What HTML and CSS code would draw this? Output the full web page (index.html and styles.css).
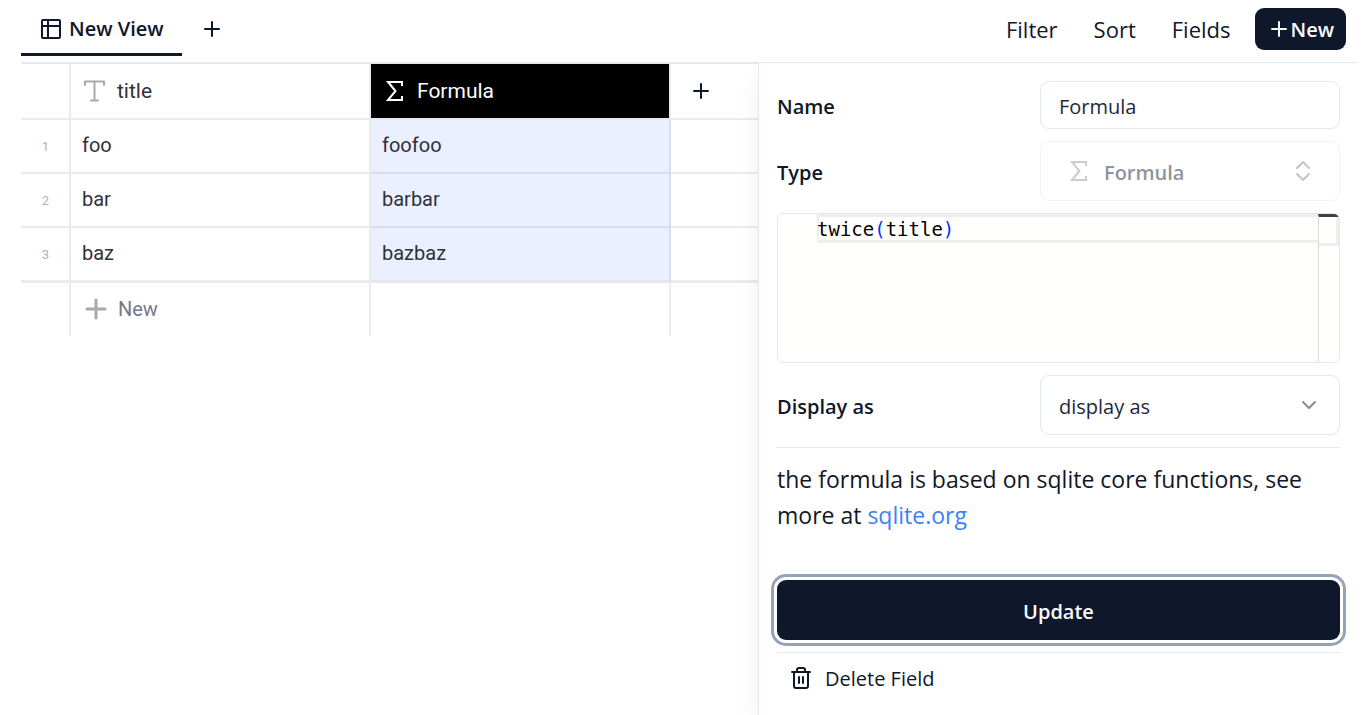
FILE: index.html
```html
<!DOCTYPE html>
<html lang="en">
<head>
<meta charset="utf-8">
<meta name="viewport" content="width=device-width, initial-scale=1">
<title>New View</title>
<link rel="stylesheet" href="styles.css">
</head>
<body>
<div class="app">
  <header class="toolbar">
    <nav class="tabs">
      <a class="tab" href="#view" aria-current="page">
        <svg class="icon" viewBox="0 0 24 24" width="24" height="24"><rect x="3" y="3" width="18" height="18" rx="1"/><path d="M3 9h18M9 3v18"/></svg>
        New View
      </a>
      <button class="add-view" type="button" aria-label="Add view">
        <svg class="icon" viewBox="0 0 24 24" width="24" height="24"><path d="M5 12h14M12 5v14"/></svg>
      </button>
    </nav>
    <div class="actions">
      <button class="action" type="button">Filter</button>
      <button class="action" type="button">Sort</button>
      <button class="action" type="button">Fields</button>
      <button class="new-button" type="button">
        <svg class="icon" viewBox="0 0 24 24" width="24" height="24"><path d="M5 12h14M12 5v14"/></svg>
        New
      </button>
    </div>
  </header>
  <div class="content">
    <main class="grid" id="view">
      <table class="table">
        <colgroup><col class="col-index"><col class="col-field"><col class="col-field"><col></colgroup>
        <thead>
          <tr>
            <th></th>
            <th><span class="head">
              <svg class="icon muted" viewBox="0 0 24 24" width="24" height="24"><path d="M3 6V2.500h19V6M12.500 2.500v19M9 21.500h7"/></svg>
              title</span></th>
            <th class="selected"><span class="head">
              <svg class="icon sigma" viewBox="0 0 24 24" width="24" height="24"><path d="M20 7V3H6l7.500 9L6 21h14v-4"/></svg>
              Formula</span></th>
            <th><button class="add-field" type="button" aria-label="Add field">
              <svg class="icon" viewBox="0 0 24 24" width="24" height="24"><path d="M5 12h14M12 5v14"/></svg>
            </button></th>
          </tr>
        </thead>
        <tbody>
          <tr><td class="index">1</td><td>foo</td><td class="highlight">foofoo</td><td></td></tr>
          <tr><td class="index">2</td><td>bar</td><td class="highlight">barbar</td><td></td></tr>
          <tr><td class="index">3</td><td>baz</td><td class="highlight">bazbaz</td><td></td></tr>
        </tbody>
        <tfoot>
          <tr><td></td><td><button class="add-row" type="button">
            <svg class="icon muted plus" viewBox="0 0 24 24" width="24" height="24"><path d="M3 12h18M12 3v18"/></svg>
            New</button></td><td></td><td></td></tr>
        </tfoot>
      </table>
    </main>
    <aside class="panel">
      <form class="form">
        <div class="row">
          <label class="label" for="name">Name</label>
          <input class="control input" id="name" type="text" value="Formula">
        </div>
        <div class="row">
          <label class="label" for="type">Type</label>
          <div class="picker disabled">
            <svg class="icon sigma picker-lead" viewBox="0 0 24 24" width="24" height="24"><path d="M20 7V3H6l7.500 9L6 21h14v-4"/></svg>
            <select class="control select with-lead" id="type" disabled><option>Formula</option></select>
            <svg class="icon picker-arrow" viewBox="0 0 24 24" width="24" height="24"><path d="M5 9l6-6 6 6M5 15l6 6 6-6"/></svg>
          </div>
        </div>
        <div class="editor">
          <div class="code" role="textbox" aria-label="Formula" contenteditable="true" spellcheck="false">twice<span class="paren">(</span>title<span class="paren">)</span></div>
          <div class="ruler"></div>
        </div>
        <div class="row">
          <label class="label" for="display">Display as</label>
          <div class="picker">
            <select class="control select" id="display"><option>display as</option></select>
            <svg class="icon picker-arrow chevron" viewBox="0 0 24 24" width="24" height="24"><path d="M5 9l6 6 6-6"/></svg>
          </div>
        </div>
        <hr class="rule">
        <p class="hint">the formula is based on sqlite core functions, see more at <a class="link" href="#sqlite">sqlite.org</a></p>
        <button class="update" type="button">Update</button>
        <hr class="rule">
        <button class="delete" type="button">
          <svg class="icon trash" viewBox="0 0 24 24" width="24" height="24"><path d="M3 5h18M5 5v14q0 2 2 2h10q2 0 2-2V5M8 5V3q0-2 2-2h4q2 0 2 2v2M10 10v6M14 10v6"/></svg>
          Delete Field
        </button>
      </form>
    </aside>
  </div>
</div>
</body>
</html>
```
FILE: styles.css
```css
* {
  box-sizing: border-box;
}

body {
  margin: 0;
  background: #fff;
  color: #0f172a;
  font-family: "Open Sans", "Noto Sans", sans-serif;
  font-size: 20px;
}

button {
  padding: 0;
  border: 0;
  background: none;
  color: inherit;
  font: inherit;
}

.app {
  display: flex;
  flex-direction: column;
  min-height: 100vh;
  padding: 0 11px 0 21px;
}

.icon {
  flex: none;
  fill: none;
  stroke: currentColor;
  stroke-width: 2;
  stroke-linecap: round;
  stroke-linejoin: round;
}

.toolbar {
  display: flex;
  justify-content: space-between;
  height: 63px;
  border-bottom: 1px solid #e2e8f0;
}

.tabs {
  display: flex;
  align-items: flex-start;
}

.tab {
  display: flex;
  align-items: center;
  gap: 6px;
  height: 56px;
  padding: 4px 18px 0;
  border-bottom: 3px solid #0f172a;
  color: inherit;
  font-weight: 600;
  text-decoration: none;
}

.add-view {
  display: flex;
  align-items: center;
  height: 58px;
  padding: 0 18px;
}

.actions {
  display: flex;
  align-items: center;
  gap: 36px;
  padding: 0 12px 4px 0;
  font-size: 22px;
}

.new-button {
  display: flex;
  align-items: center;
  height: 42px;
  margin-left: -12px;
  padding: 0 12px;
  border-radius: 9px;
  background: #0f172a;
  color: #f8fafc;
  font-size: 20px;
  font-weight: 600;
}

.content {
  display: flex;
  flex: 1;
}

.grid {
  flex: 1;
  min-width: 0;
  border-top: 1px solid #e2e8f0;
  font-family: Roboto, sans-serif;
  color: #313139;
}

.table {
  width: 100%;
  table-layout: fixed;
  border-collapse: separate;
  border-spacing: 0;
}

.col-index {
  width: 50px;
}

.col-field {
  width: 300px;
}

th,
td {
  height: 54px;
  padding: 0 0 2px 11px;
  border-right: 2px solid #ebebec;
  border-bottom: 2px solid #ebebec;
  font-weight: 400;
  text-align: left;
}

th {
  height: 56px;
  padding-bottom: 0;
  font-size: 21px;
}

th:last-child,
td:last-child {
  border-right: 0;
}

tbody tr:last-child td {
  height: 55px;
  border-bottom-width: 3px;
}

tfoot td {
  height: 53px;
  border-bottom: 0;
}

.head,
.add-row {
  display: flex;
  align-items: center;
  gap: 11px;
}

.selected {
  background: #000;
  background-clip: padding-box;
  color: #fff;
}

.highlight {
  border-color: #d9deee;
  background: #eaf0ff;
}

tbody tr:last-child .highlight {
  border-bottom-color: #e6e7ec;
}

td.index {
  padding: 0 0 0 1px;
  color: #b0b3c4;
  font-size: 13px;
  text-align: center;
}

.muted {
  color: #a9a9a9;
}

.sigma {
  stroke-linecap: butt;
  stroke-linejoin: miter;
}

.plus {
  stroke-width: 3;
}

.add-row {
  gap: 10px;
  padding-left: 2px;
  color: #77788a;
}

.add-field {
  display: flex;
  padding-left: 7px;
  color: #0f172a;
}

.panel {
  z-index: 1;
  width: 600px;
  padding: 18px;
  border-left: 1px solid #e2e8f0;
  background: #fff;
  box-shadow: -6px 10px 20px -4px rgba(0, 0, 0, 0.06);
  clip-path: inset(0 0 0 -30px);
}

.form {
  display: flex;
  flex-direction: column;
  gap: 12px;
}

.row {
  display: flex;
  align-items: center;
  justify-content: space-between;
}

.label {
  padding-top: 2px;
  font-weight: 600;
}

.control {
  width: 300px;
  height: 60px;
  padding: 2px 18px 0;
  border: 1px solid #e2e8f0;
  border-radius: 9px;
  background: #fff;
  color: #1e293b;
  font: inherit;
}

.input {
  height: 48px;
}

.picker {
  position: relative;
}

.select {
  display: block;
  appearance: none;
  opacity: 1;
}

.with-lead {
  padding-left: 63px;
  font-weight: 600;
}

.disabled {
  opacity: 0.5;
}

.picker-lead,
.picker-arrow {
  position: absolute;
  top: 18px;
  pointer-events: none;
}

.picker-lead {
  left: 26px;
  color: #9a9a9a;
}

.picker-arrow {
  right: 24px;
  color: #878b95;
}

.chevron {
  right: 18px;
}

.editor {
  display: flex;
  height: 150px;
  padding-left: 39px;
  overflow: hidden;
  border: 1px solid #e5e7eb;
  border-radius: 6px;
  background: #fffffe;
}

.code {
  flex: 1;
  height: 29px;
  border-top: 3px solid #eee;
  border-bottom: 3px solid #eee;
  box-shadow: inset 2px 0 #eee;
  outline: 0;
  color: #000;
  font: 19px/24px "DejaVu Sans Mono", monospace;
}

.paren {
  color: #0431fa;
}

.ruler {
  width: 21px;
  border-top: 3px solid #424242;
  border-left: 1px solid #d8d8d8;
}

.ruler::before {
  content: "";
  display: block;
  height: 26px;
  border-right: 3px solid #eee;
  border-bottom: 3px solid #eee;
}

.rule {
  width: 100%;
  height: 1px;
  margin: 0;
  border: 0;
  background: #e2e8f0;
}

.hint {
  margin: 1px 0 35px;
  font-size: 23px;
  line-height: 36px;
}

.link {
  color: #3b82f6;
  text-decoration: none;
}

.update {
  height: 60px;
  padding-top: 2px;
  border-radius: 9px;
  background: #0f172a;
  box-shadow: 0 0 0 3px #fff, 0 0 0 6px #94a3b8;
  color: #f8fafc;
  font-weight: 600;
}

.delete {
  display: flex;
  align-items: center;
  gap: 12px;
  padding-left: 12px;
}
```
